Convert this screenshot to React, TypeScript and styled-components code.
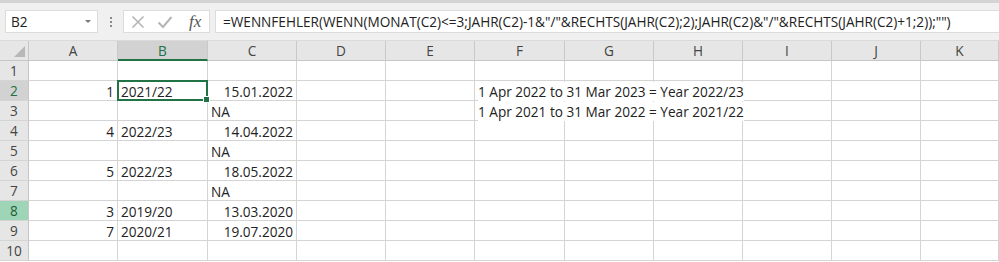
import React from "react";
import styled, { createGlobalStyle, css } from "styled-components";

const Global = createGlobalStyle`
  html, body { margin: 0; padding: 0; background: #ffffff; }
  body { font-family: "Open Sans", "Liberation Sans", sans-serif; }
  * { box-sizing: border-box; }
`;

const FONT = `"Open Sans", "Liberation Sans", sans-serif`;

const Page = styled.div`
  width: 999px;
  height: 262px;
  overflow: hidden;
  display: flex;
  flex-direction: column;
  background: #ffffff;
`;

const TopStrip = styled.div`
  height: 3px;
  background: #d4d4d4;
`;

const FormulaBar = styled.div`
  height: 38px;
  background: #f0f0f0;
  display: flex;
  align-items: flex-start;
  padding: 7px 0 0 5px;
  border-bottom: 1px solid #dadada;
`;

const NameBox = styled.div`
  width: 93px;
  height: 23px;
  background: #ffffff;
  border: 1px solid #dcdcdc;
  display: flex;
  align-items: center;
  justify-content: space-between;
  padding: 0 6px 0 5px;
  font-family: ${FONT};
  font-size: 13.6px;
  color: #222;
`;

const Caret = styled.span`
  width: 0;
  height: 0;
  border-left: 3px solid transparent;
  border-right: 3px solid transparent;
  border-top: 3px solid #777;
`;

const Dots = styled.div`
  width: 25px;
  height: 23px;
  display: flex;
  flex-direction: column;
  align-items: center;
  justify-content: center;
  gap: 2px;
  & > span {
    width: 2px;
    height: 2px;
    background: #8a8a8a;
  }
`;

const FxBox = styled.div`
  width: 87px;
  height: 23px;
  background: #ffffff;
  border: 1px solid #dcdcdc;
  display: flex;
  align-items: center;
  padding: 0 0 0 7px;
  gap: 12px;
`;

const Fx = styled.span`
  font-family: "Liberation Serif", "DejaVu Serif", serif;
  font-style: italic;
  font-size: 17px;
  color: #555;
  margin-left: 4px;
  line-height: 1;
`;

const FormulaInput = styled.div`
  flex: 1;
  margin-left: 5px;
  height: 23px;
  background: #ffffff;
  border: 1px solid #dcdcdc;
  border-right: none;
  display: flex;
  align-items: center;
  padding-left: 7px;
  font-family: ${FONT};
  font-size: 13.6px;
  color: #222;
  white-space: nowrap;
  overflow: hidden;
`;

const COLS = [89, 90, 89, 89, 89, 90, 89, 89, 89, 89];

const Grid = styled.div`
  display: grid;
  grid-template-columns: 29px ${COLS.map((c) => c + "px").join(" ")} 1fr;
  grid-auto-rows: 20px;
  font-family: ${FONT};
  font-size: 13.6px;
  color: #222;
`;

const Corner = styled.div`
  background: #e6e6e6;
  border-right: 1px solid #c6c6c6;
  border-bottom: 1px solid #c6c6c6;
  position: relative;
  &::after {
    content: "";
    position: absolute;
    right: 3px;
    bottom: 3px;
    width: 0;
    height: 0;
    border-left: 11px solid transparent;
    border-bottom: 11px solid #b8b8b8;
  }
`;

const ColHeader = styled.div<{ $active?: boolean }>`
  background: #e6e6e6;
  border-right: 1px solid #c9c9c9;
  border-bottom: 1px solid #c6c6c6;
  display: flex;
  align-items: center;
  justify-content: center;
  color: #444;
  ${(p) =>
    p.$active &&
    css`
      background: #d2d2d2;
      color: #217346;
      border-bottom: 2px solid #217346;
    `}
`;

const RowHeader = styled.div<{ $mode?: "sel" | "hl" }>`
  background: #e6e6e6;
  border-right: 1px solid #c6c6c6;
  border-bottom: 1px solid #d4d4d4;
  display: flex;
  align-items: center;
  justify-content: center;
  color: #444;
  ${(p) =>
    p.$mode === "sel" &&
    css`
      background: #d2d2d2;
      color: #217346;
    `}
  ${(p) =>
    p.$mode === "hl" &&
    css`
      background: #9fd5b7;
      color: #1e5c38;
    `}
`;

const Cell = styled.div<{ $align?: "left" | "right"; $overflow?: boolean }>`
  border-right: 1px solid #d4d4d4;
  border-bottom: 1px solid #d4d4d4;
  display: flex;
  align-items: center;
  justify-content: ${(p) => (p.$align === "right" ? "flex-end" : "flex-start")};
  padding: 1px 3px 0 3px;
  white-space: nowrap;
  position: relative;
  overflow: ${(p) => (p.$overflow ? "visible" : "hidden")};
  z-index: ${(p) => (p.$overflow ? 2 : "auto")};
`;

const Overflow = styled.span`
  background: #ffffff;
`;

const Selection = styled.div`
  position: absolute;
  left: -1px;
  top: -1px;
  right: -1px;
  bottom: -1px;
  border: 2px solid #217346;
  pointer-events: none;
  &::after {
    content: "";
    position: absolute;
    right: -4px;
    bottom: -4px;
    width: 5px;
    height: 5px;
    background: #217346;
    border: 1px solid #ffffff;
  }
`;

const LETTERS = ["A", "B", "C", "D", "E", "F", "G", "H", "I", "J", "K"];

type Row = {
  a?: string;
  b?: string;
  c?: string;
  cText?: boolean;
  f?: string;
};

const ROWS: Row[] = [
  {},
  { a: "1", b: "2021/22", c: "15.01.2022", f: "1 Apr 2022 to 31 Mar 2023 = Year 2022/23" },
  { c: "NA", cText: true, f: "1 Apr 2021 to 31 Mar 2022 = Year 2021/22" },
  { a: "4", b: "2022/23", c: "14.04.2022" },
  { c: "NA", cText: true },
  { a: "5", b: "2022/23", c: "18.05.2022" },
  { c: "NA", cText: true },
  { a: "3", b: "2019/20", c: "13.03.2020" },
  { a: "7", b: "2020/21", c: "19.07.2020" },
  {},
];

const XIcon = () => (
  <svg width="14" height="14" viewBox="0 0 14 14">
    <path d="M1.5 1.5 L12.5 12.5 M12.5 1.5 L1.5 12.5" stroke="#b5b5b5" strokeWidth="1.6" fill="none" />
  </svg>
);

const CheckIcon = () => (
  <svg width="16" height="14" viewBox="0 0 16 14">
    <path d="M1.5 7.5 L6 12 L14.5 2" stroke="#b5b5b5" strokeWidth="2" fill="none" />
  </svg>
);

export default function App() {
  return (
    <Page>
      <Global />
      <TopStrip />
      <FormulaBar>
        <NameBox>
          B2
          <Caret />
        </NameBox>
        <Dots>
          <span />
          <span />
          <span />
        </Dots>
        <FxBox>
          <XIcon />
          <CheckIcon />
          <Fx>fx</Fx>
        </FxBox>
        <FormulaInput>
          {'=WENNFEHLER(WENN(MONAT(C2)<=3;JAHR(C2)-1&"/"&RECHTS(JAHR(C2);2);JAHR(C2)&"/"&RECHTS(JAHR(C2)+1;2));"")'}
        </FormulaInput>
      </FormulaBar>
      <Grid>
        <Corner />
        {LETTERS.map((l) => (
          <ColHeader key={l} $active={l === "B"}>
            {l}
          </ColHeader>
        ))}
        {ROWS.map((r, i) => {
          const n = i + 1;
          return (
            <React.Fragment key={n}>
              <RowHeader $mode={n === 2 ? "sel" : n === 8 ? "hl" : undefined}>{n}</RowHeader>
              <Cell $align="right">{r.a}</Cell>
              <Cell $overflow={n === 2}>
                {r.b}
                {n === 2 && <Selection />}
              </Cell>
              <Cell $align={r.cText ? "left" : "right"}>{r.c}</Cell>
              <Cell />
              <Cell />
              <Cell $overflow={!!r.f}>{r.f && <Overflow>{r.f}</Overflow>}</Cell>
              <Cell />
              <Cell />
              <Cell />
              <Cell />
              <Cell />
            </React.Fragment>
          );
        })}
      </Grid>
    </Page>
  );
}
